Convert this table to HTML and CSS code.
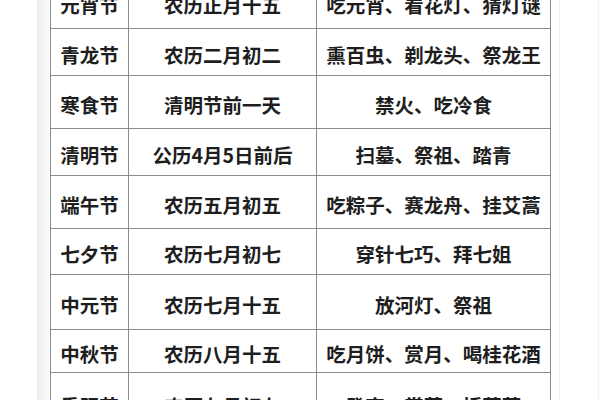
FILE: index.html
```html
<!DOCTYPE html>
<html lang="zh-CN">
<head>
<meta charset="utf-8">
<title>中国传统节日</title>
<link rel="stylesheet" href="styles.css">
</head>
<body>
<div class="frame">
  <div class="sheet">
    <div class="festivals">
      <div class="cell">元宵节</div><div class="cell">农历正月十五</div><div class="cell">吃元宵、看花灯、猜灯谜</div>
      <div class="cell">青龙节</div><div class="cell">农历二月初二</div><div class="cell">熏百虫、剃龙头、祭龙王</div>
      <div class="cell">寒食节</div><div class="cell">清明节前一天</div><div class="cell">禁火、吃冷食</div>
      <div class="cell">清明节</div><div class="cell">公历4月5日前后</div><div class="cell">扫墓、祭祖、踏青</div>
      <div class="cell">端午节</div><div class="cell">农历五月初五</div><div class="cell">吃粽子、赛龙舟、挂艾蒿</div>
      <div class="cell">七夕节</div><div class="cell">农历七月初七</div><div class="cell">穿针七巧、拜七姐</div>
      <div class="cell">中元节</div><div class="cell">农历七月十五</div><div class="cell">放河灯、祭祖</div>
      <div class="cell">中秋节</div><div class="cell">农历八月十五</div><div class="cell">吃月饼、赏月、喝桂花酒</div>
      <div class="cell">重阳节</div><div class="cell">农历九月初九</div><div class="cell">登高、赏菊、插茱萸</div>
    </div>
  </div>
</div>
</body>
</html>
```

FILE: styles.css
```css
html, body {
  margin: 0;
  padding: 0;
  background: #ffffff;
  overflow: hidden;
}

.frame {
  width: 598px;
  height: 400px;
  border-right: 1px solid #f0f0f0;
  overflow: hidden;
}

.sheet {
  margin-left: 37px;
  width: 523px;
  height: 400px;
  border-right: 1px solid #ececec;
  background: linear-gradient(to right, #eeeeee 0, #f6f6f6 8px, #fbfbfb 12px, #ffffff 13px);
  padding-left: 13px;
  box-sizing: border-box;
  overflow: hidden;
}

.festivals {
  display: grid;
  grid-template-columns: 77px 187px 233px;
  grid-template-rows: 51px 46px 52px 46px 52px 45px 54px 42px 60px;
  gap: 1px;
  padding: 1px;
  width: max-content;
  margin-top: -24px;
  background: #8c8c8c;
}

.cell {
  background: #ffffff;
  display: flex;
  align-items: center;
  justify-content: center;
  padding-top: 4px;
  box-sizing: border-box;
  font-family: "Noto Sans CJK SC", "Noto Sans", sans-serif;
  font-size: 19.5px;
  font-weight: 700;
  color: #1e1e1e;
  white-space: nowrap;
}
```
